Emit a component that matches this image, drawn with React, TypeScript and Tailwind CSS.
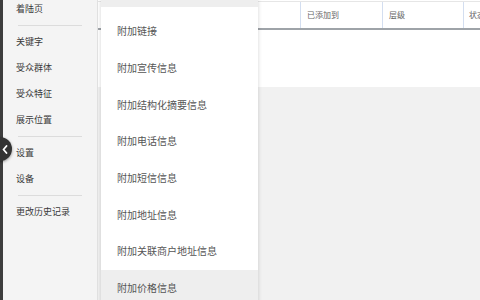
import React from "react";

const sideGroups = [
  ["着陆页"],
  ["关键字", "受众群体", "受众特征", "展示位置"],
  ["设置", "设备"],
  ["更改历史记录"],
];

const menuItems = [
  "附加链接",
  "附加宣传信息",
  "附加结构化摘要信息",
  "附加电话信息",
  "附加短信信息",
  "附加地址信息",
  "附加关联商户地址信息",
  "附加价格信息",
];

export default function App() {
  return (
    <div
      className="relative w-[480px] h-[300px] overflow-hidden flex bg-[#f1f1f1]"
      style={{ fontFamily: '"Noto Sans CJK SC", "Noto Sans", sans-serif' }}
    >
      <div className="w-[3px] shrink-0 bg-[#3d3d3d]" />
      <aside className="w-[95px] shrink-0 bg-[#f4f4f4] border-r border-[#e2e2e2] pl-[13px] pr-[15px] text-[9px] leading-none text-[#3a3a3a]">
        <div className="-mt-[5px]">
          {sideGroups.map((g, gi) => (
            <div key={gi}>
              {gi > 0 && <div className="mt-1 mb-[2px] ml-[2px] h-px bg-[#dcdcdc]" />}
              {g.map((t) => (
                <div key={t} className="h-[26px] flex items-center">
                  {t}
                </div>
              ))}
            </div>
          ))}
        </div>
      </aside>
      <main className="flex-1 flex flex-col">
        <div className="bg-white h-[87px] pt-px">
          <div className="h-[29px] border-t border-[#e6e6e6] border-b-2 border-b-[#9ea3a8] flex text-[8px] text-[#666]">
            <div className="w-[202px] shrink-0" />
            <div className="w-[82px] shrink-0 border-l border-[#d3def0] pl-[6px] flex items-center">
              已添加到
            </div>
            <div className="w-[81px] shrink-0 border-l border-[#d3def0] pl-[6px] flex items-center">
              层级
            </div>
            <div className="flex-1 border-l border-[#d3def0] pl-[5px] flex items-center whitespace-nowrap">
              状态
            </div>
          </div>
        </div>
      </main>

      <div className="absolute left-[101px] top-0 w-[157px] h-[310px] bg-white shadow-[0_0_4px_rgba(0,0,0,0.18)] text-[10px] leading-none text-[#555]">
        <div className="h-[7px] bg-[#eeeeee]" />
        <div className="h-[6px]" />
        {menuItems.map((t, i) => (
          <div
            key={t}
            className={`h-[36.7px] flex items-center pl-4 ${i === menuItems.length - 1 ? "bg-[#eeeeee]" : ""}`}
          >
            {t}
          </div>
        ))}
      </div>

      <div className="absolute left-[-12px] top-[137px] w-[24px] h-[24px] rounded-full bg-[#333] shadow-[0_1px_3px_rgba(0,0,0,0.4)] flex items-center justify-end pr-[4px]">
        <svg width="6" height="9" viewBox="0 0 6 9">
          <path d="M4.5 1 L1.5 4.5 L4.5 8" stroke="white" strokeWidth="1.8" fill="none" strokeLinecap="round" strokeLinejoin="round" />
        </svg>
      </div>
    </div>
  );
}
